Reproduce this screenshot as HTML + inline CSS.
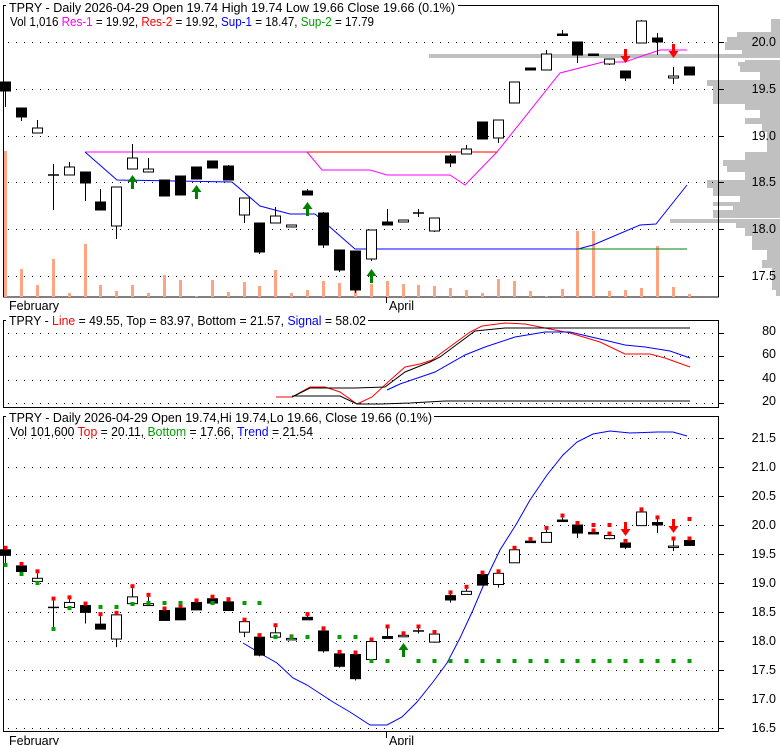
<!DOCTYPE html>
<html><head><meta charset="utf-8"><style>
html,body{margin:0;padding:0;background:#fff;width:780px;height:745px;overflow:hidden}
svg{display:block}
text{font-family:"Liberation Sans",Arial,sans-serif;font-size:12.5px}
</style></head><body>
<svg id="s" width="780" height="745" xmlns="http://www.w3.org/2000/svg">
<g id="hist" fill="#c0c0c0"></g>
<g id="g"></g>
<!-- top panel texts -->
<rect x="6" y="0" width="452" height="14" fill="#fff"/>
<text x="9" y="12" textLength="446" lengthAdjust="spacingAndGlyphs">TPRY - Daily 2026-04-29 Open 19.74  High 19.74  Low 19.66  Close 19.66 (0.1%)</text>
<text x="10" y="26" textLength="364" lengthAdjust="spacingAndGlyphs">Vol 1,016 <tspan fill="#ff00ff">Res-1</tspan> = 19.92, <tspan fill="#ff0000">Res-2</tspan> = 19.92, <tspan fill="#0000ff">Sup-1</tspan> = 18.47, <tspan fill="#00a000">Sup-2</tspan> = 17.79</text>
<g text-anchor="end">
<text x="776" y="46">20.0</text><text x="776" y="93">19.5</text><text x="776" y="140">19.0</text>
<text x="776" y="186">18.5</text><text x="776" y="233">18.0</text><text x="776" y="280">17.5</text>
<text x="776" y="335">80</text><text x="776" y="358">60</text><text x="776" y="382">40</text><text x="776" y="405">20</text>
<text x="776" y="442">21.5</text><text x="776" y="471">21.0</text><text x="776" y="500">20.5</text>
<text x="776" y="529">20.0</text><text x="776" y="558">19.5</text><text x="776" y="587">19.0</text>
<text x="776" y="616">18.5</text><text x="776" y="645">18.0</text><text x="776" y="674">17.5</text>
<text x="776" y="703">17.0</text><text x="776" y="732">16.5</text>
</g>
<text x="9" y="310">February</text>
<text x="389" y="310">April</text>
<rect x="6" y="313" width="362" height="14" fill="#fff"/>
<text x="9" y="325" textLength="357" lengthAdjust="spacingAndGlyphs">TPRY - <tspan fill="#ff0000">Line</tspan> = 49.55, Top = 83.97, Bottom = 21.57, <tspan fill="#0000ff">Signal</tspan> = 58.02</text>
<rect x="6" y="410" width="428" height="14" fill="#fff"/>
<text x="9" y="422" textLength="423" lengthAdjust="spacingAndGlyphs">TPRY - Daily 2026-04-29 Open 19.74,Hi 19.74,Lo 19.66, Close 19.66 (0.1%)</text>
<text x="10" y="436" textLength="303" lengthAdjust="spacingAndGlyphs">Vol 101,600 <tspan fill="#ff0000">Top</tspan> = 20.11, <tspan fill="#00a000">Bottom</tspan> = 17.66, <tspan fill="#0000ff">Trend</tspan> = 21.54</text>
<text x="9" y="745">February</text>
<text x="389" y="745">April</text>
</svg>
<script>
var NS="http://www.w3.org/2000/svg",G=document.getElementById('g'),H=document.getElementById('hist');
function el(t,a,p){var e=document.createElementNS(NS,t);for(var k in a)e.setAttribute(k,a[k]);(p||G).appendChild(e);return e;}
function line(x1,y1,x2,y2,c,w,d){var a={x1:x1,y1:y1,x2:x2,y2:y2,stroke:c,'stroke-width':w||1};if(d)a['stroke-dasharray']=d;return el('line',a);}
function poly(pts,c){el('polyline',{points:pts,fill:'none',stroke:c,'stroke-width':1});}
// histogram
var hs=[[19,32,771],[32,37,737],[37,42,727],[42,50,725],[50,54,742],[60,62,745],[62,66,738],[66,72,740],[72,80,760],[80,86,707],[86,104,713],[104,110,745],[110,118,760],[118,124,745],[124,132,762],[132,152,767],[152,160,745],[160,166,723],[166,172,727],[172,180,745],[180,188,707],[188,196,713],[196,202,740],[202,206,713],[206,210,733],[210,218,713],[222,228,736],[228,236,745],[236,250,752],[250,260,767],[260,268,762],[268,290,772],[290,296,776]];
hs.forEach(function(h){el('rect',{x:h[2],y:h[0],width:780-h[2],height:h[1]-h[0]},H);});
el('rect',{x:429,y:54,width:351,height:4},H);
el('rect',{x:670,y:219,width:110,height:4},H);
// frames
el('rect',{x:3.5,y:5.5,width:715,height:291.5,fill:'none',stroke:'#000'});
el('rect',{x:3.5,y:320.5,width:715,height:87,fill:'none',stroke:'#000'});
el('rect',{x:3.5,y:416.5,width:715,height:315,fill:'none',stroke:'#000'});
line(386.5,297,386.5,303,'#000');line(386.5,732,386.5,738,'#000');
// grids
[42,89,136,182,229,276,333,356,380,403].forEach(function(y){line(8,y+.5,719,y+.5,'#000',1,'1,7');line(719,y+.5,724,y+.5,'#000');});
[438,467,496,525,554,583,612,641,670,699,728].forEach(function(y){line(8,y+.5,719,y+.5,'#000',1,'1,7');line(719,y+.5,724,y+.5,'#000');});
var X=function(i){return Math.round(5+15.9*i)+.5;};
// volume
var vol=[151,269,285,259,293,244,285,291,285,293,275,280,296,280,292,282,286,270,293,290,281,283,290,284,281,284,285,286,288,290,293,279,281,291,296,289,231,231,291,290,288,246,287,294];
vol.forEach(function(v,i){el('rect',{x:X(i)-1.5,y:v,width:3,height:297-v,fill:'#ffa482'});});
// top lines
poly('85,152 307,152 322,170 370,170 387,175 450,175 465,185 497,152 560,73 603,62 625,62 645,55 660,50 687,50','#ff00ff');
poly('307,152 497,152','#ff0000');
poly('85,152 117,180 232,182 260,206 290,214 315,214 355,249 578,249 593,245 640,225 656,224 687,185','#0000ff');
poly('578,249 687,249','#008000');
// middle lines
poly('276,397 292,397 310,387 325,387 340,392 357,404 372,397 387,383 405,367 420,364 432,360 440,354 455,343 470,332 482,326 505,323 525,324 545,328 570,333 600,342 625,354 650,354 665,358 690,367','#ff0000');
poly('292,397 310,388 355,388 385,387 405,372 430,362 440,357 475,331 505,328 690,328','#000');
poly('292,396 340,396 357,404 380,404 410,403 445,401 690,401','#000');
poly('387,390 400,384 435,372 465,355 485,347 515,337 545,332 570,332 600,339 625,345 645,347 670,351 690,358','#0000ff');
// bottom trend
poly('243,643 263,655 277,663 293,678 307,685 333,702 350,712 370,725 387,725 402,717 417,702 433,682 447,663 460,638 473,610 487,577 500,550 517,523 530,500 547,475 563,455 577,442 593,434 610,431 630,433 657,432 673,432 687,436','#0000ff');
// candles
var C=[[82,91,82,107,1],[108,117,108,121,1],[128,133,120,133,0],[175,175,164,210,2],[167,175,162,175,0],[172,183,172,201,1],[202,210,189,210,1],[187,226,187,239,0],[158,169,144,169,0],[169,172,158,172,0],[180,196,180,196,1],[176,195,176,195,1],[167,179,167,179,1],[161,168,161,168,1],[166,180,165,180,1],[198,215,198,223,0],[223,252,223,254,1],[216,223,207,223,0],[225,227,225,227,0],[191,195,189,195,1],[213,245,212,248,1],[250,270,250,272,1],[251,290,251,293,1],[230,259,230,261,0],[222,225,209,225,1],[220,222,220,222,0],[213,213,209,217,2],[218,231,218,232,0],[156,163,154,167,1],[149,154,145,154,0],[122,139,122,139,1],[120,138,120,143,0],[82,103,82,103,0],[68,70,68,70,1],[54,70,50,70,0],[34,35,30,35,1],[42,55,42,63,1],[54,55,54,55,1],[59,64,59,65,0],[71,78,71,81,1],[21,43,20,43,0],[38,42,33,55,1],[76,78,67,84,0],[67,75,67,75,1]];
function yb(y){return 525+(y-42)*0.6197;}
function candle(x,c,f){var t=f(c[0]),b=f(c[1]),h=f(c[2]),l=f(c[3]);
 line(x,h,x,l,'#000');
 if(c[4]==2||b-t<1.5&&c[4]==2){line(x-5.5,t,x+5.5,t,'#000',1.5);return;}
 el('rect',{x:x-5,y:t,width:10,height:Math.max(b-t,1.5),fill:c[4]?'#000':'#fff',stroke:'#000','stroke-width':1});}
C.forEach(function(c,i){candle(X(i),c,function(v){return v;});candle(X(i),c,yb);});
// bottom markers
C.forEach(function(c,i){var hy=yb(c[2]);el('rect',{x:X(i)-2,y:hy-4,width:4,height:4,fill:'#ff0000'});});
[[37,525],[38,525],[43,519]].forEach(function(p){el('rect',{x:X(p[0])-2,y:p[1]-2,width:4,height:4,fill:'#ff0000'});});
var gr=[[0,565],[1,574],[2,583],[3,629],[4,608],[6,607],[7,607],[8,604],[9,603],[10,603],[11,603],[13,603],[15,603],[16,603],[17,637],[18,637],[19,637],[21,637],[22,637],[23,661],[24,661]];
for(var i=26;i<44;i++)gr.push([i,661]);
gr.forEach(function(p){el('rect',{x:X(p[0])-2,y:p[1]-2,width:4,height:4,fill:'#00a000'});});
// arrows
function up(x,y,c){el('polygon',{points:(x-5)+','+(y+7)+' '+x+','+y+' '+(x+5)+','+(y+7),fill:c});el('rect',{x:x-1.5,y:y+6,width:3,height:8,fill:c});}
function dn(x,y,c){el('rect',{x:x-1.5,y:y-14,width:3,height:8,fill:c});el('polygon',{points:(x-5)+','+(y-7)+' '+x+','+y+' '+(x+5)+','+(y-7),fill:c});}
up(X(8),175,'#008000');up(X(12),185,'#008000');up(X(19),202,'#008000');up(X(23),269,'#008000');
dn(X(39),63,'#ff0000');dn(X(42),58,'#ff0000');
up(X(25),643,'#008000');dn(X(39),536,'#ff0000');dn(X(42),533,'#ff0000');
</script>
</body></html>
